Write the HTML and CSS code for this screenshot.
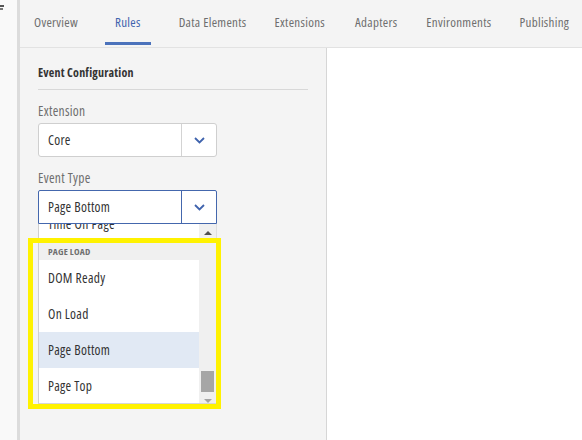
FILE: index.html
```html
<!DOCTYPE html>
<html lang="en">
<head>
<meta charset="utf-8">
<title>Rules - Event Configuration</title>
<link rel="stylesheet" href="styles.css">
</head>
<body>
<div class="app">
  <aside class="rail"><span class="rail-mark"></span><span class="rail-mark short"></span></aside>
  <div class="main">
    <nav class="tabs">
      <a class="tab">Overview</a>
      <a class="tab active">Rules</a>
      <a class="tab">Data Elements</a>
      <a class="tab">Extensions</a>
      <a class="tab">Adapters</a>
      <a class="tab">Environments</a>
      <a class="tab">Publishing</a>
    </nav>
    <div class="body">
      <section class="panel">
        <h2 class="panel-title">Event Configuration</h2>
        <div class="field-label">Extension</div>
        <div class="select">
          <span class="select-value">Core</span>
          <span class="select-btn"><svg width="11" height="7" viewBox="0 0 11 7"><path d="M1 1l4.5 4.5L10 1" fill="none" stroke="#3f63ad" stroke-width="1.8"/></svg></span>
        </div>
        <div class="field-label">Event Type</div>
        <div class="select focused">
          <span class="select-value">Page Bottom</span>
          <span class="select-btn"><svg width="11" height="7" viewBox="0 0 11 7"><path d="M1 1l4.5 4.5L10 1" fill="none" stroke="#3f63ad" stroke-width="1.8"/></svg></span>
        </div>
        <div class="dropdown">
          <div class="dropdown-view">
            <ul class="options">
              <li class="option">Time On Page</li>
              <li class="group">PAGE LOAD</li>
              <li class="option">DOM Ready</li>
              <li class="option">On Load</li>
              <li class="option selected">Page Bottom</li>
              <li class="option">Page Top</li>
            </ul>
          </div>
          <div class="scrollbar">
            <span class="arrow up"></span>
            <span class="track"><span class="thumb"></span></span>
            <span class="arrow down"></span>
          </div>
          <div class="highlight"></div>
        </div>
      </section>
      <div class="canvas"></div>
    </div>
  </div>
</div>
</body>
</html>
```

FILE: styles.css
```css
* { box-sizing: border-box; }
html, body { margin: 0; padding: 0; }
body {
  width: 582px;
  height: 440px;
  overflow: hidden;
  font-family: "Open Sans", Lato, "Liberation Sans", sans-serif;
  font-stretch: 75%;
  font-size: 13px;
  letter-spacing: 0.3px;
  color: #333;
  background: #fff;
}
.app { display: flex; height: 440px; }
.rail {
  width: 20px;
  flex: none;
  background: #f9f9f9;
  border-right: 3px solid #dcdcdc;
  padding-top: 5px;
  display: flex;
  flex-direction: column;
  gap: 1px;
}
.rail-mark { display: block; width: 4px; height: 2px; background: #555; }
.rail-mark.short { width: 3px; background: #777; }
.main { flex: 1; display: flex; flex-direction: column; background: #f4f4f4; }
.tabs {
  height: 48px;
  display: flex;
  align-items: flex-end;
  padding: 0 0 2px 4px;
  gap: 8px;
  border-bottom: 1px solid #e2e2e2;
}
.tab {
  height: 45px;
  padding: 1px 10px 0;
  display: flex;
  align-items: center;
  border-bottom: 3px solid transparent;
  color: #6e6e6e;
  font-size: 13px;
  white-space: nowrap;
}
.tab:nth-child(2) { margin-left: 9px; }
.tab:nth-child(3) { margin-left: 10px; }
.tab:nth-child(5) { margin-left: 2px; }
.tab:nth-child(6) { margin-left: 1px; }
.tab.active { color: #3f63ad; border-bottom-color: #4b72bb; }
.body { flex: 1; display: flex; }
.panel {
  width: 307px;
  flex: none;
  border-right: 1px solid #d6d6d6;
  padding: 0 18px;
}
.canvas { flex: 1; background: #fff; }
.panel-title {
  margin: 17px 0 0;
  padding-bottom: 8px;
  border-bottom: 1px solid #d8d8d8;
  font-size: 12px;
  line-height: 16px;
  font-weight: 700;
  letter-spacing: 0.2px;
  color: #333;
}
.field-label {
  margin-top: 13px;
  line-height: 16px;
  font-size: 13.5px;
  color: #6e6e6e;
}
.select {
  margin-top: 4px;
  width: 179px;
  height: 34px;
  display: flex;
  background: #fff;
  border: 1px solid #cfcfcf;
  border-radius: 3px;
}
.select-value { flex: 1; display: flex; align-items: center; padding-left: 9px; font-size: 13.5px; color: #333; }
.select-btn {
  width: 35px;
  flex: none;
  display: flex;
  align-items: center;
  justify-content: center;
  border-left: 1px solid #d3d3d3;
}
.select.focused { border-color: #4467ad; border-radius: 2px 2px 0 0; }
.select.focused .select-btn { border-left-color: #4467ad; }
.dropdown {
  position: relative;
  width: 179px;
  height: 180px;
  display: flex;
  background: #fff;
  border-left: 1px solid #cfcfcf;
  border-right: 1px solid #dedede;
  border-bottom: 1px solid #d6d6d6;
}
.dropdown-view { flex: 1; overflow: hidden; }
.options { list-style: none; margin: -18px 0 0; padding: 0; }
.option {
  height: 36px;
  display: flex;
  align-items: center;
  padding-left: 9px;
  font-size: 13.5px;
  color: #333;
}
.option.selected { background: #e1e9f4; }
.group {
  height: 18px;
  display: flex;
  align-items: center;
  padding: 1px 0 0 9px;
  background: #f0f0f0;
  font-size: 9.5px;
  font-weight: 700;
  color: #6f6f6f;
  letter-spacing: 0.2px;
}
.scrollbar {
  width: 17px;
  flex: none;
  background: #f0f0f0;
  display: flex;
  flex-direction: column;
  align-items: center;
}
.arrow { width: 0; height: 0; border-left: 4px solid transparent; border-right: 4px solid transparent; }
.arrow.up { margin-top: 7px; border-bottom: 4px solid #505050; }
.arrow.down { margin-top: 4px; border-top: 4px solid #a3a3a3; }
.track { flex: 1; width: 100%; display: flex; flex-direction: column; justify-content: flex-end; padding: 0 0 0 2px; }
.thumb { display: block; width: 13px; height: 21px; background: #a6a6a6; margin-bottom: 3px; }
.highlight {
  position: absolute;
  left: -11px;
  top: 14px;
  width: 193px;
  height: 171px;
  border: 5px solid #fff200;
  pointer-events: none;
}
```
